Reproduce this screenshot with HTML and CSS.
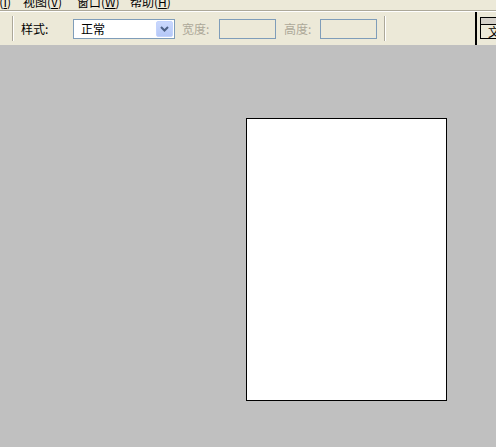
FILE: index.html
```html
<!DOCTYPE html>
<html lang="zh-CN">
<head>
    <meta charset="UTF-8">
    <title>页面设置</title>
    <link rel="stylesheet" href="styles.css">
</head>
<body>
    <div class="menubar">
        <span class="menu-item first">图像(<u>I</u>)</span>
        <span class="menu-item view">视图(<u>V</u>)</span>
        <span class="menu-item win">窗口(<u>W</u>)</span>
        <span class="menu-item">帮助(<u>H</u>)</span>
    </div>

    <div class="toolbar">
        <div class="sep"></div>
        <span class="label style-label">样式:</span>
        <div class="combo">
            <span class="combo-text">正常</span>
            <span class="combo-btn">
                <svg width="9" height="6" viewBox="0 0 9 6">
                    <path d="M1 1 L4.5 4.5 L8 1" fill="none" stroke="#4d6185" stroke-width="2"/>
                </svg>
            </span>
        </div>
        <span class="label disabled w-label">宽度:</span>
        <div class="field"></div>
        <span class="label disabled h-label">高度:</span>
        <div class="field"></div>
        <div class="sep sep-end"></div>

        <div class="dock">
            <div class="dock-head"></div>
            <div class="dock-body">文</div>
        </div>
    </div>

    <div class="workspace">
        <div class="page"></div>
    </div>
</body>
</html>
```

FILE: styles.css
```css
* {
    box-sizing: border-box;
    margin: 0;
    padding: 0;
}

body {
    width: 496px;
    height: 447px;
    overflow: hidden;
    display: flex;
    flex-direction: column;
    background: #c0c0c0;
    font-family: "Noto Sans CJK SC", "DejaVu Sans", sans-serif;
    font-size: 12px;
    color: #000;
}

/* Menu bar (top is cut off) */
.menubar {
    height: 11px;
    background: #ece9d8;
    border-bottom: 1px solid #aca899;
    overflow: hidden;
    display: flex;
    white-space: nowrap;
}

.menu-item {
    line-height: 12px;
    margin-top: -4px;
    flex: none;
}

.menu-item.first {
    width: 50px;
    margin-left: -39px;
    margin-right: 12px;
    text-align: right;
}

.menu-item.view {
    width: 54px;
}

.menu-item.win {
    width: 53px;
}

/* Toolbar */
.toolbar {
    height: 34px;
    background: #ece9d8;
    border-top: 1px solid #fff;
    display: flex;
    align-items: center;
    padding-left: 12px;
    overflow: hidden;
    white-space: nowrap;
}

.sep {
    width: 2px;
    height: 25px;
    border-left: 1px solid #aca899;
    border-right: 1px solid #fff;
}

.sep-end {
    margin-left: 7px;
}

.label {
    line-height: 14px;
}

.style-label {
    margin-left: 7px;
    width: 52px;
}

.disabled {
    color: #aca899;
}

.w-label {
    margin-left: 7px;
    width: 37px;
}

.h-label {
    margin-left: 8px;
    width: 36px;
}

.combo {
    width: 102px;
    height: 20px;
    border: 1px solid #7f9db9;
    background: #fff;
    display: flex;
    align-items: center;
    padding: 1px;
}

.combo-text {
    flex: 1;
    padding-left: 6px;
    line-height: 14px;
}

.combo-btn {
    width: 17px;
    height: 16px;
    border-radius: 2px;
    background: linear-gradient(#cad8fc, #b5c8f7);
    border: 1px solid #c3d3fd;
    display: flex;
    align-items: center;
    justify-content: center;
}

.field {
    width: 57px;
    height: 20px;
    border: 1px solid #7f9db9;
    background: #ece9d8;
}

/* Docked panel on the right edge */
.dock {
    margin-left: auto;
    margin-right: -20px;
    align-self: stretch;
    display: flex;
    flex-direction: column;
    padding: 5px 0 5px 3px;
    border-left: 2px solid #000;
    width: 41px;
}

.dock-head {
    height: 7px;
    background: #d4d0c8;
    border: 1px solid #000;
    border-bottom: none;
}

.dock-body {
    height: 15px;
    border: 1px solid #000;
    padding-left: 7px;
    line-height: 13px;
    font-size: 12px;
}

/* Canvas */
.workspace {
    flex: 1;
    background: #c0c0c0;
    padding-top: 73px;
    padding-left: 246px;
}

.page {
    width: 201px;
    height: 283px;
    background: #fff;
    border: 1px solid #000;
}
```
